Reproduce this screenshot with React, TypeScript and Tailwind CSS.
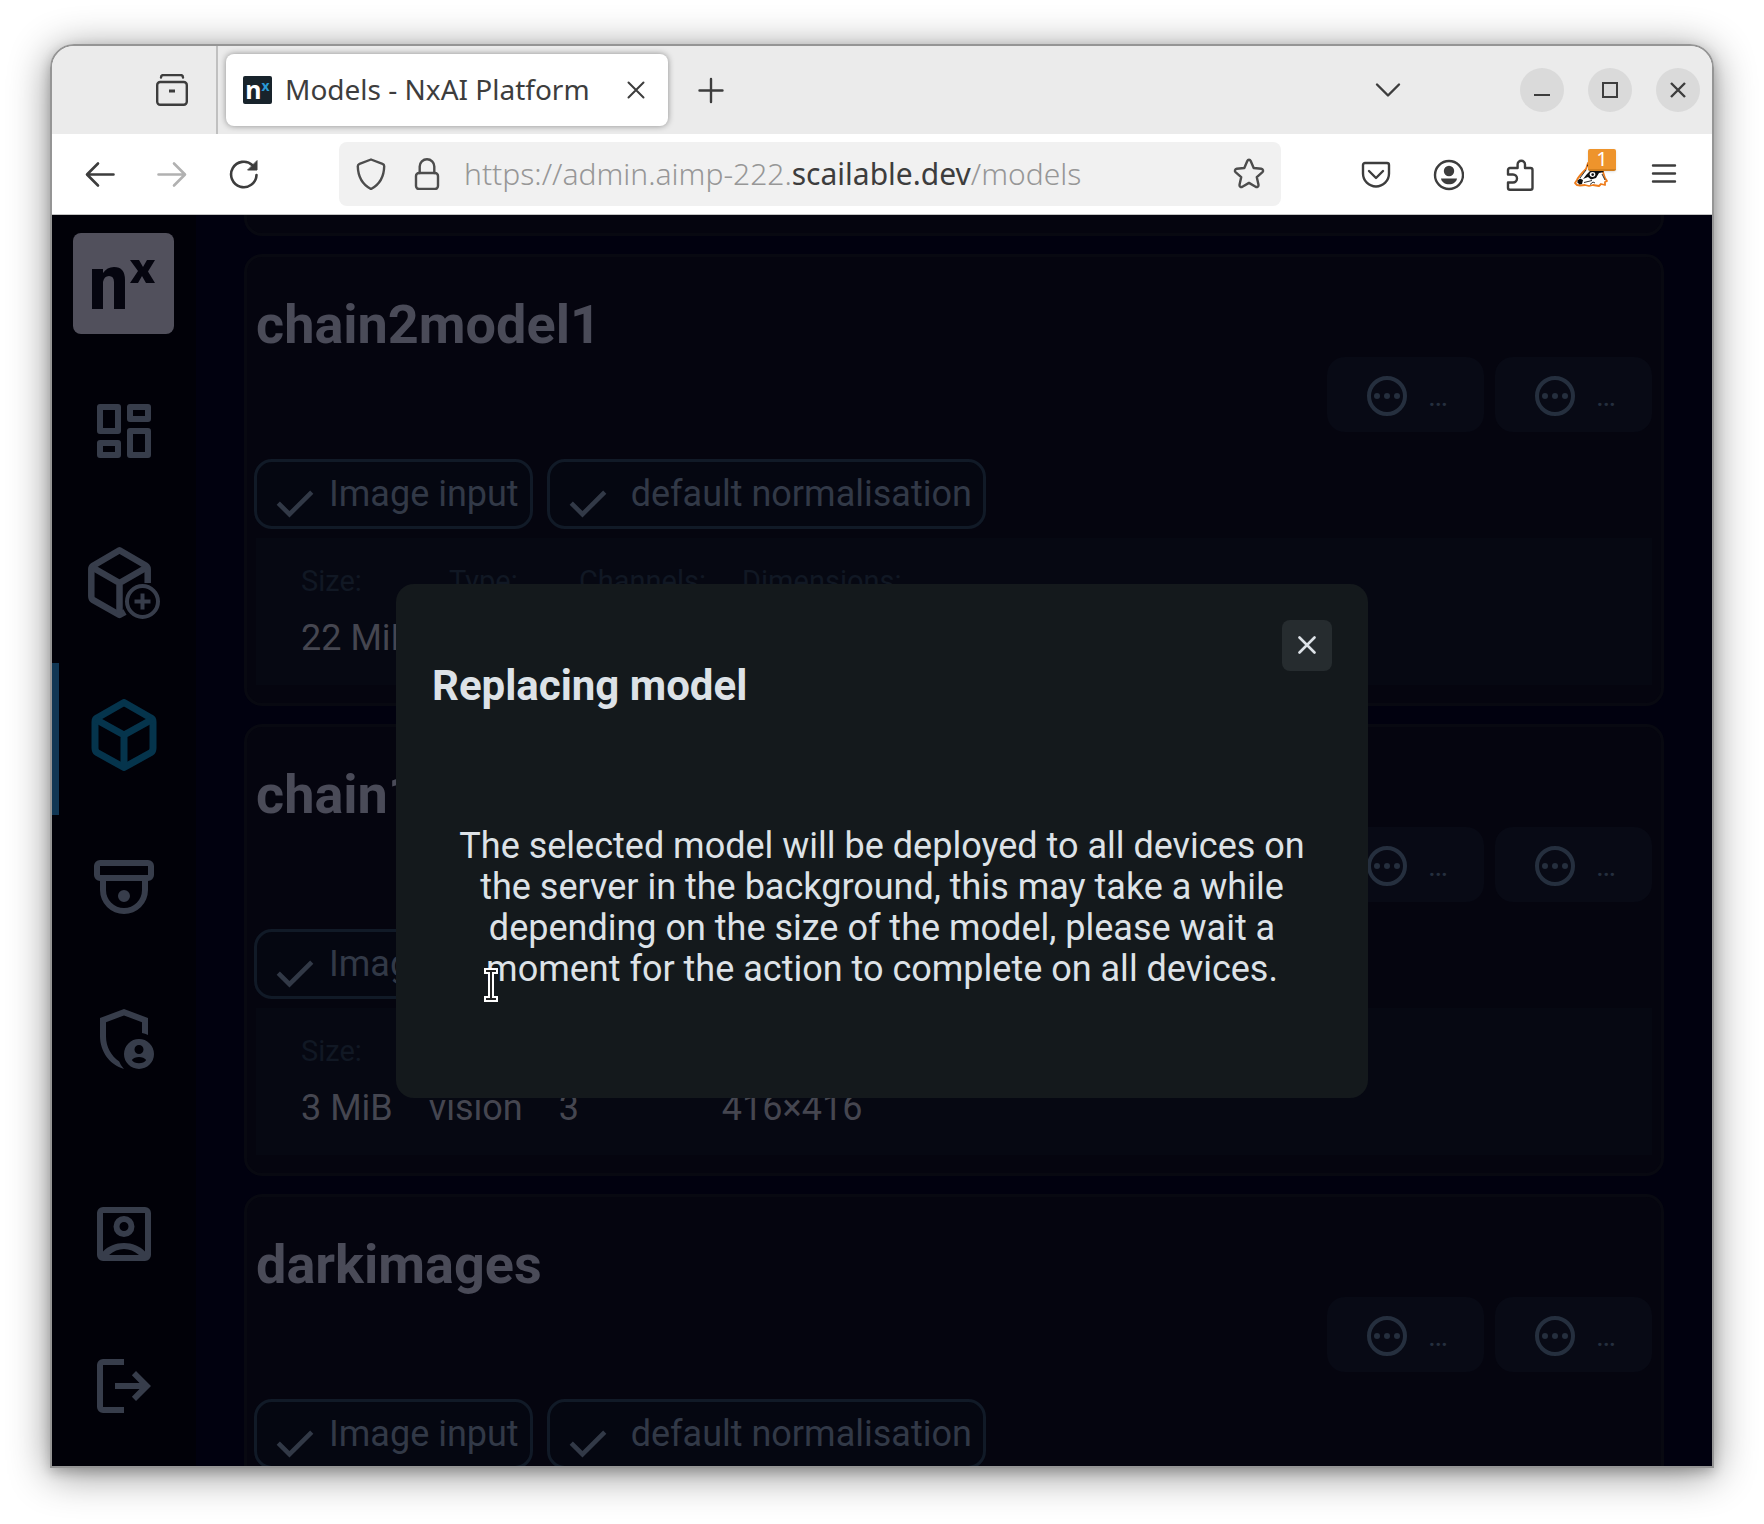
import React from "react";

const Z: React.FC<React.SVGProps<SVGSVGElement> & { size?: number }> = ({ size = 32, children, ...rest }) => (
  <svg width={size} height={size} viewBox="0 0 32 32" fill="none" stroke="currentColor" strokeWidth={2} strokeLinecap="round" strokeLinejoin="round" aria-hidden="true" className="shrink-0" {...rest}>
    {children}
  </svg>
);

const Mdi = ({ d }: { d: string }) => (
  <svg width={72} height={72} viewBox="0 0 24 24" fill="currentColor" fillRule="evenodd" aria-hidden="true">
    <path d={d} />
  </svg>
);

function IconButton({ label, children, className = "" }: { label: string; children: React.ReactNode; className?: string }) {
  return (
    <button type="button" aria-label={label} className={`flex size-8 shrink-0 items-center justify-center ${className}`}>
      {children}
    </button>
  );
}

function WindowButton({ label, children }: { label: string; children: React.ReactNode }) {
  return (
    <button type="button" aria-label={label} className="flex size-11 items-center justify-center rounded-full bg-[#dadada]">
      <svg width="16" height="16" viewBox="0 0 16 16" fill="none" stroke="#3d3d3d" strokeWidth="2" aria-hidden="true">
        {children}
      </svg>
    </button>
  );
}

function TabStrip() {
  return (
    <header className="flex h-[88px] shrink-0 items-center bg-[#ebebeb] text-[#3d3d3d]">
      <div className="flex h-full w-[166px] shrink-0 items-center justify-end border-r-2 border-[#c0c0c0] pr-7">
        <IconButton label="View recent browsing">
          <Z>
            <path d="M5 3.5C5 2 6 1 7.500 1h17C26 1 27 2 27 3.500" strokeWidth="2.400" />
            <rect x="1.200" y="8" width="29.600" height="22.800" rx="3" strokeWidth="2.400" />
            <path d="M13 17h6" strokeWidth="3" strokeLinecap="butt" />
          </Z>
        </IconButton>
      </div>
      <div className="ml-2 flex h-[72px] w-[442px] shrink-0 items-center rounded-lg bg-white pl-[17px] pr-4 shadow-[0_0_6px_rgba(0,0,0,0.4)]">
        <span className="flex h-7 w-[29px] shrink-0 justify-center rounded-xs bg-[#18232b] text-white" aria-hidden="true">
          <b className="text-[25px] leading-[26px]">n</b>
          <b className="text-[14px] leading-[20px] text-[#2a9ad6]">x</b>
        </span>
        <span className="ml-[13px] flex-1 truncate pb-0.5 text-[28px]">Models - NxAI Platform</span>
        <IconButton label="Close tab">
          <Z size={18} viewBox="0 0 18 18"><path d="M1.500 1.500l15 15M16.500 1.500l-15 15" /></Z>
        </IconButton>
      </div>
      <IconButton label="New tab" className="ml-[27px]">
        <Z><path d="M16 5v23M4.500 16.500h23" strokeWidth="2.400" /></Z>
      </IconButton>
      <IconButton label="List all tabs" className="ml-auto mr-[116px]">
        <Z><path d="M5 10.500l11 11 11-11" strokeWidth="2.400" /></Z>
      </IconButton>
      <div className="mr-3 flex gap-6">
        <WindowButton label="Minimize"><path d="M0 13h16" /></WindowButton>
        <WindowButton label="Maximize"><path d="M1 1h14v14H1z" /></WindowButton>
        <WindowButton label="Close"><path d="M1 1l14 14M15 1L1 15" strokeWidth="2.400" /></WindowButton>
      </div>
    </header>
  );
}

function Badger() {
  return (
    <svg width="32" height="24" viewBox="0 0 32 24" overflow="visible" aria-hidden="true">
      <path d="M1 17C2 14 6 10 10 6L12 0h8l6 6 3 9 2 3-2 1v3l-4-1-2 2-6-1-4 1-4-1-5 .5-3-.5-2-2z" fill="#fff" stroke="#ee7c1b" strokeWidth="1.800" strokeLinejoin="round" />
      <path d="M1.500 17.500l2.500-2 3 1.500-1 4-2.500.5-2-2z" fill="#111" />
      <path d="M11 2l2-1 3 3 8 1 4 4-5 1-3 5-5 1.500-3-2.500-5 2 4-5 3-3z" fill="#111" />
      <path d="M4 15l6-8M8 19.500l8-2M14 21.500l3-2.500 2 1M26 11l3 6" fill="none" stroke="#333" />
      <ellipse cx="16.500" cy="11.500" rx="2.800" ry="2.400" fill="#fff" />
      <circle cx="16.700" cy="11.600" r="1.300" fill="#111" />
    </svg>
  );
}

function Toolbar() {
  return (
    <div className="flex h-[81px] shrink-0 items-center border-b border-[#c4c4c4] bg-white pl-8 pr-8 text-[#3d3d3d]">
      <div className="flex gap-10">
        <IconButton label="Back"><Z><path d="M29.500 16.500H3.500M14 5.500l-11 11 11 11" strokeWidth="2.600" /></Z></IconButton>
        <IconButton label="Forward" className="text-[#b1b1b1]"><Z><path d="M2.500 16.500h26M18 5.500l11 11-11 11" strokeWidth="2.600" /></Z></IconButton>
        <IconButton label="Reload">
          <Z>
            <path d="M28.500 17A12.700 12.700 0 1 1 24.500 7.200" strokeWidth="2.600" />
            <path d="M29 3v9h-9z" fill="currentColor" strokeWidth="1" />
          </Z>
        </IconButton>
      </div>
      <div className="ml-[79px] flex h-16 min-w-0 flex-1 items-center rounded-lg bg-[#f1f1f1] pl-4 pr-4 text-[#4d4d4d]">
        <IconButton label="Tracking protection">
          <Z><path d="M16 1.500l11.500 4.300c1 .4 1.700 1.300 1.700 2.400C29 18 25.500 26 16 31 6.500 26 3 18 2.800 8.200c0-1.100.7-2 1.700-2.400z" strokeWidth="2.400" /></Z>
        </IconButton>
        <IconButton label="Site information" className="ml-6">
          <Z>
            <rect x="5" y="15" width="22" height="16" rx="3" strokeWidth="2.400" />
            <path d="M8.700 15V8.500a7.300 7.300 0 0 1 14.600 0V15" strokeWidth="2.400" />
          </Z>
        </IconButton>
        <div className="ml-[21px] min-w-0 flex-1 truncate pb-0.5 text-[30px] font-light text-[#979797]">
          https://admin.aimp-222.<span className="font-normal text-[#3d3d3d]">scailable.dev</span>/models
        </div>
        <IconButton label="Bookmark this page">
          <Z><path d="M16 1.800c.8 0 1.400.5 1.700 1.200l3 7 7.600.7c1.700.2 2.400 2.200 1.200 3.400l-5.700 5.100 1.700 7.500c.4 1.700-1.400 2.900-2.900 2L16 24.900l-6.600 3.800c-1.500.9-3.300-.3-2.900-2l1.700-7.500-5.700-5.100C1.300 12.900 2 10.900 3.700 10.700l7.600-.7 3-7c.3-.7.900-1.200 1.700-1.200z" strokeWidth="2.400" /></Z>
        </IconButton>
      </div>
      <div className="ml-[79px] flex items-center gap-10 pt-0.5">
        <IconButton label="Save to Pocket">
          <Z>
            <path d="M5 4h22a2 2 0 0 1 2 2v8.500a13 13 0 0 1-26 0V6a2 2 0 0 1 2-2z" strokeWidth="2.400" />
            <path d="M9 12l7 7 7-7" strokeWidth="2.400" />
          </Z>
        </IconButton>
        <IconButton label="Account">
          <Z>
            <circle cx="17" cy="16" r="14" strokeWidth="2.400" />
            <circle cx="17" cy="12" r="5.200" fill="currentColor" stroke="none" />
            <path d="M9 19.500h16c-.5 3.500-4 5.800-8 5.800s-7.500-2.300-8-5.800z" fill="currentColor" stroke="none" />
          </Z>
        </IconButton>
        <IconButton label="Extensions">
          <Z>
            <path d="M6 30.800h20.500a2 2 0 0 0 2-2V11a2 2 0 0 0-2-2H21V5.500a3.700 3.700 0 0 0-7.400 0V9H6a2 2 0 0 0-2 2v4.500h5a3.800 3.800 0 0 1 0 8H4v5.300a2 2 0 0 0 2 2z" strokeWidth="2.400" />
          </Z>
        </IconButton>
        <button type="button" aria-label="Privacy Badger" className="relative flex size-8 items-center justify-center">
          <Badger />
          <span className="absolute -top-2.5 left-3 flex h-[22px] w-7 items-center justify-center rounded-xs border-b-2 border-[#d3801f] bg-[#ee942c] text-[20px] leading-5 text-white shadow">1</span>
        </button>
        <IconButton label="Open application menu"><Z><path d="M5 6.500h22M5 14.500h22M5 22.500h22" strokeWidth="2.400" /></Z></IconButton>
      </div>
    </div>
  );
}

function CubeIcon() {
  return (
    <svg width={72} height={72} viewBox="0 0 72 72" fill="none" stroke="currentColor" strokeWidth="7" strokeLinejoin="round" aria-hidden="true">
      <path d="M36 3.500L63 19q2 1 2 4v26q0 3-2 4.500L36 68.500 9 53.500Q7 52 7 49V23q0-3 2-4z" />
      <path d="M8 20.500L36 36l28-15.500M36 36v32" />
    </svg>
  );
}

function CubePlusIcon() {
  return (
    <svg width={72} height={72} viewBox="0 0 72 72" fill="none" stroke="currentColor" strokeWidth="6.500" strokeLinejoin="round" aria-hidden="true">
      <path d="M59.700 36V22q0-2-2-3.500L31.500 3.300 5.500 18.500Q3.300 20 3.300 22v27q0 3 2 4.200L31.500 68l5.500-3" />
      <path d="M4.500 20.500l27 15.500 27-15.500M31.500 36v31" />
      <circle cx="54.500" cy="54.500" r="15.500" strokeWidth="4" />
      <path d="M54.500 46.500v16M46.500 54.500h16" strokeWidth="4" />
    </svg>
  );
}

const dashboard =
  "M4 3h6a1 1 0 0 1 1 1v8a1 1 0 0 1-1 1H4a1 1 0 0 1-1-1V4a1 1 0 0 1 1-1zm1 2v6h4V5zM14 3h6a1 1 0 0 1 1 1v4a1 1 0 0 1-1 1h-6a1 1 0 0 1-1-1V4a1 1 0 0 1 1-1zm1 2v2h4V5zM14 11h6a1 1 0 0 1 1 1v8a1 1 0 0 1-1 1h-6a1 1 0 0 1-1-1v-8a1 1 0 0 1 1-1zm1 2v6h4v-6zM4 15h6a1 1 0 0 1 1 1v4a1 1 0 0 1-1 1H4a1 1 0 0 1-1-1v-4a1 1 0 0 1 1-1zm1 2v2h4v-2z";
const camera =
  "M4 3h16a2 2 0 0 1 2 2v3a2 2 0 0 1-2 2v3a8 8 0 0 1-16 0v-3a2 2 0 0 1-2-2V5a2 2 0 0 1 2-2zm0 2v3h16V5zm2 5v3a6 6 0 0 0 12 0v-3zm6 3a2 2 0 1 1 0 4 2 2 0 0 1 0-4z";
const shield =
  "M12 2l8 3v5.700q-1-.5-2-.7V6.400l-6-2.250L6 6.400v4.700c0 3.600 1.700 6.500 4.400 8.400q.5 1.400 1.600 2.500C7.300 20.700 4 16.200 4 11.100V5zM17 12a5 5 0 1 1 0 10 5 5 0 0 1 0-10zm0 2a1.500 1.500 0 1 0 0 3 1.500 1.500 0 0 0 0-3zm0 4c-1 0-1.900.4-2.400 1 .5.700 1.400 1.100 2.400 1.100s1.900-.4 2.400-1.100c-.5-.6-1.400-1-2.400-1z";
const account =
  "M5 3h14a2 2 0 0 1 2 2v14a2 2 0 0 1-2 2H5a2 2 0 0 1-2-2V5a2 2 0 0 1 2-2zm0 2v12.850C6.800 16 9.200 15 12 15s5.200 1 7 2.850V5zM7 19h10c-1.500-1.300-3.200-2-5-2s-3.500.7-5 2zM12 6a3.500 3.500 0 1 1 0 7 3.500 3.500 0 0 1 0-7zm0 2a1.500 1.500 0 1 0 0 3 1.500 1.500 0 0 0 0-3z";
const logout =
  "M5 3h7v2H5v14h7v2H5a2 2 0 0 1-2-2V5a2 2 0 0 1 2-2zM16 7l5 5-5 5-1.375-1.450L17.175 13H9v-2h8.175l-2.550-2.550z";

function NavItem({ label, active, children }: { label: string; active?: boolean; children: React.ReactNode }) {
  return (
    <a
      href="#"
      aria-label={label}
      aria-current={active ? "page" : undefined}
      className={`flex h-[152px] shrink-0 justify-center border-l-[7px] pr-[7px] pt-9 ${active ? "border-[#113754] text-[#05344c]" : "border-transparent text-[#373d4b]"}`}
    >
      {children}
    </a>
  );
}

function Sidebar() {
  return (
    <nav className="flex w-36 shrink-0 flex-col bg-[#010108]" aria-label="Main">
      <a href="#" aria-label="Nx home" className="ml-[21px] mt-[18px] mb-[25px] flex size-[101px] shrink-0 rounded-lg bg-[#51505c] text-[#05050f]">
        <svg width="101" height="101" viewBox="0 0 101 101" fill="currentColor" aria-hidden="true">
          <path d="M19 36h11v4q4-6 11-6 11 0 11 13v29H41V49q0-6-5-6t-6 6v27H19z" />
          <path d="M57 27h9l4 7 4-7h8l-7 11.500L82 50h-9l-4-7-4 7h-8l8-12z" />
        </svg>
      </a>
      <NavItem label="Dashboard"><Mdi d={dashboard} /></NavItem>
      <NavItem label="Add model"><CubePlusIcon /></NavItem>
      <NavItem label="Models" active><CubeIcon /></NavItem>
      <NavItem label="Devices"><Mdi d={camera} /></NavItem>
      <NavItem label="Administration"><Mdi d={shield} /></NavItem>
      <div className="mt-auto">
        <NavItem label="Account"><Mdi d={account} /></NavItem>
        <NavItem label="Log out"><Mdi d={logout} /></NavItem>
      </div>
    </nav>
  );
}

function MoreButton({ label }: { label: string }) {
  return (
    <button type="button" aria-label={label} className="flex h-[75px] w-[157px] items-center gap-5 rounded-[18px] bg-[#080a15] pl-[39px] pt-0.5 text-[#252f3e]">
      <svg width="42" height="42" viewBox="0 0 42 42" fill="none" stroke="currentColor" strokeWidth="4" aria-hidden="true">
        <circle cx="21" cy="21" r="18" />
        <g fill="currentColor" stroke="none">
          <circle cx="11" cy="21" r="3" />
          <circle cx="21" cy="21" r="3" />
          <circle cx="31" cy="21" r="3" />
        </g>
      </svg>
      <span className="text-[30px]">…</span>
    </button>
  );
}

function Pill({ text, wide }: { text: string; wide?: boolean }) {
  return (
    <span className="flex h-[70px] items-center rounded-[18px] border-[3px] border-[#111a27] bg-[#050711] pl-5 pr-[11px] text-[36px] text-[#323947]">
      <svg width="36" height="36" viewBox="4 4 16 16" fill="currentColor" overflow="visible" className="mt-5 shrink-0" aria-hidden="true">
        <path d="M9.550 18l-5.700-5.700 1.425-1.425L9.550 15.150l9.175-9.175L20.150 7.400z" />
      </svg>
      <span className={wide ? "ml-[25px]" : "ml-4"}>{text}</span>
    </span>
  );
}

type Model = { name: string; size: string };
const models: Model[] = [
  { name: "chain2model1", size: "22 MiB" },
  { name: "chain1model1", size: "3 MiB" },
  { name: "darkimages", size: "3 MiB" },
];

function ModelCard({ name, size }: Model) {
  const facts = [
    ["Size:", size],
    ["Type:", "vision"],
    ["Channels:", "3"],
    ["Dimensions:", "416×416"],
  ];
  return (
    <article className="shrink-0 rounded-[18px] border-[3px] border-[#080911] bg-[#05050f] pb-[18px]">
      <h2 className="pl-[9px] pt-9 text-[54px] font-bold leading-[64px] text-[#4a4b58]">{name}</h2>
      <div className="flex justify-end gap-[11px] pr-[9px]">
        <MoreButton label="Deploy model" />
        <MoreButton label="More actions" />
      </div>
      <div className="mt-[27px] flex gap-[14px] pl-[7px]">
        <Pill text="Image input" />
        <Pill text="default normalisation" wide />
      </div>
      <dl className="mx-[9px] mt-[9px] flex h-[147px] gap-9 bg-[#060812] pl-[45px] pt-[25px]">
        {facts.map(([k, v]) => (
          <div key={k}>
            <dt className="text-[29px] leading-[36px] text-[#111824]">{k}</dt>
            <dd className="mt-[18px] text-[36px] leading-[42px] text-[#454650]">{v}</dd>
          </div>
        ))}
      </dl>
    </article>
  );
}

function ReplaceDialog() {
  return (
    <div className="absolute inset-0 flex items-center justify-center">
      <div role="dialog" aria-modal="true" aria-labelledby="dialog-title" className="relative w-[972px] rounded-[18px] bg-[#14191c] p-9 text-[#dde2e7]">
        <button type="button" aria-label="Close" className="ml-auto flex h-[51px] w-[50px] items-center justify-center rounded-lg bg-[#262c2f]">
          <svg width="18" height="18" viewBox="0 0 18 18" fill="none" stroke="currentColor" strokeWidth="2.600" strokeLinecap="round" aria-hidden="true">
            <path d="M1.500 1.500l15 15M16.500 1.500l-15 15" />
          </svg>
        </button>
        <h1 id="dialog-title" className="-mt-[9px] text-[42px] font-bold leading-[48px]">Replacing model</h1>
        <p className="mx-auto mt-[116px] mb-[72px] max-w-[860px] text-center text-[36px] leading-[41px]">
          The selected model will be deployed to all devices on the server in the background, this may take a while depending on the size of the model, please wait a moment for the action to complete on all devices.
        </p>
        <svg width="14" height="34" viewBox="0 0 14 34" className="absolute left-[88px] top-[384px]" fill="#222" stroke="#fff" strokeWidth="2" aria-hidden="true">
          <path d="M1 1h12v4H9v24h4v4H1v-4h4V5H1z" />
        </svg>
      </div>
    </div>
  );
}

export default function App() {
  return (
    <div className="flex h-screen bg-white px-[50px] pb-14 pt-11 font-['Noto_Sans',sans-serif]">
      <div className="flex min-w-0 flex-1 flex-col overflow-hidden rounded-t-3xl border-2 border-[#959595] shadow-[0_6px_40px_rgba(0,0,0,0.45),0_4px_12px_rgba(0,0,0,0.2)]">
        <TabStrip />
        <Toolbar />
        <div className="relative flex min-h-0 flex-1 overflow-hidden bg-[#01010f] font-['Roboto',sans-serif]">
          <Sidebar />
          <main className="flex min-w-0 flex-1 flex-col gap-[18px] overflow-hidden px-12">
            <div className="h-[21px] shrink-0 rounded-b-[18px] border-[3px] border-t-0 border-[#080911] bg-[#05050f]" />
            {models.map((m) => (
              <ModelCard key={m.name} {...m} />
            ))}
          </main>
          <ReplaceDialog />
        </div>
      </div>
    </div>
  );
}
